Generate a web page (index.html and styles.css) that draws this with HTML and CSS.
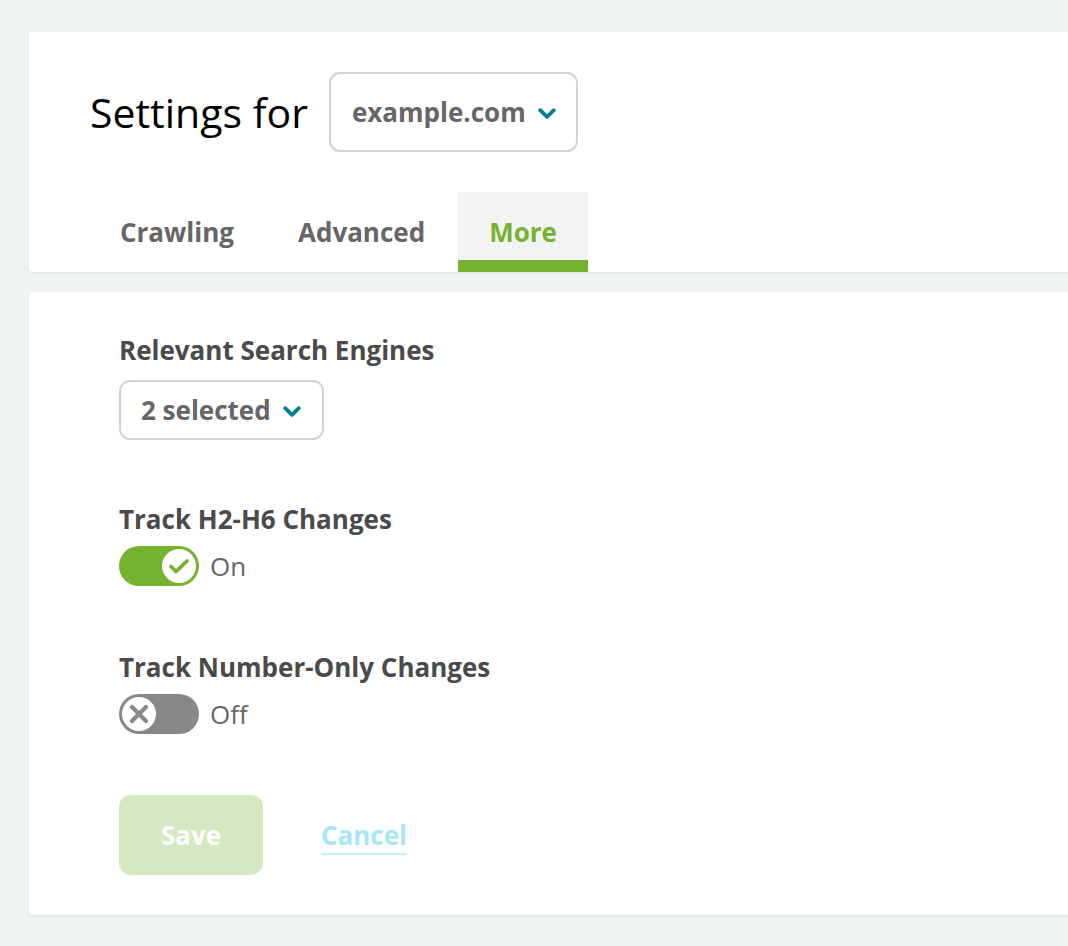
FILE: index.html
```html
<!DOCTYPE html>
<html lang="en">
<head>
<meta charset="utf-8">
<title>Settings</title>
<link rel="stylesheet" href="styles.css">
</head>
<body>
<div class="page">
  <section class="card header-card">
    <div class="title-row">
      <h1 class="title">Settings for</h1>
      <button class="select select-lg">
        <span>example.com</span>
        <svg class="chev" width="18" height="11" viewBox="0 0 18 11"><path d="M2.2 2.2l6.8 6.6 6.8-6.6" fill="none" stroke="#00838f" stroke-width="3.8" stroke-linecap="round" stroke-linejoin="round"/></svg>
      </button>
    </div>
    <nav class="tabs">
      <a class="tab">Crawling</a>
      <a class="tab">Advanced</a>
      <a class="tab active">More</a>
    </nav>
  </section>

  <section class="card body-card">
    <div class="field">
      <div class="label">Relevant Search Engines</div>
      <button class="select select-sm">
        <span>2 selected</span>
        <svg class="chev" width="18" height="11" viewBox="0 0 18 11"><path d="M2.2 2.2l6.8 6.6 6.8-6.6" fill="none" stroke="#00838f" stroke-width="3.8" stroke-linecap="round" stroke-linejoin="round"/></svg>
      </button>
    </div>

    <div class="field">
      <div class="label">Track H2-H6 Changes</div>
      <div class="toggle-row">
        <span class="toggle on">
          <span class="knob">
            <svg width="26" height="26" viewBox="0 0 26 26"><path d="M5 13.5l5 5L21 8" fill="none" stroke="#76b22f" stroke-width="3.8" stroke-linecap="round" stroke-linejoin="round"/></svg>
          </span>
        </span>
        <span class="toggle-text">On</span>
      </div>
    </div>

    <div class="field">
      <div class="label">Track Number-Only Changes</div>
      <div class="toggle-row">
        <span class="toggle off">
          <span class="knob">
            <svg width="26" height="26" viewBox="0 0 26 26"><path d="M6 6l14 14M20 6L6 20" fill="none" stroke="#888888" stroke-width="4.2" stroke-linecap="round"/></svg>
          </span>
        </span>
        <span class="toggle-text">Off</span>
      </div>
    </div>

    <div class="actions">
      <button class="btn-save">Save</button>
      <a class="cancel">Cancel</a>
    </div>
  </section>
</div>
</body>
</html>
```

FILE: styles.css
```css
* { box-sizing: border-box; }
html, body {
  margin: 0;
  padding: 0;
  background: #f0f3f4;
  font-family: "Open Sans", "Noto Sans", sans-serif;
}
.page {
  padding: 32px 0 0 29px;
  overflow: hidden;
  height: 946px;
}
.card {
  background: #ffffff;
  border-radius: 4px 0 0 4px;
  margin-right: -20px;
  box-shadow: 0 1px 3px rgba(0, 0, 0, 0.08);
}
.header-card {
  padding: 40px 0 0 61px;
  height: 240px;
}
.title-row {
  display: flex;
  align-items: center;
  gap: 21px;
}
.title {
  margin: 0;
  font-size: 41px;
  font-weight: 400;
  color: #000;
  line-height: 80px;
}
.select {
  display: inline-flex;
  align-items: center;
  gap: 12px;
  background: #fff;
  border: 2px solid #d3d3d3;
  border-radius: 11px;
  font-family: inherit;
  font-weight: 700;
  font-size: 26px;
  color: #666;
  cursor: pointer;
}
.select-lg {
  height: 80px;
  padding: 0 20px 0 21px;
}
.select-sm {
  height: 60px;
  padding: 0 21px 0 20px;
}
.chev { display: block; margin-top: 2px; }
.tabs {
  display: flex;
  margin-top: 40px;
  margin-left: -2px;
}
.tab {
  height: 80px;
  padding: 12px 32px 0;
  line-height: 56px;
  font-size: 26px;
  font-weight: 700;
  color: #666;
  border-bottom: 12px solid transparent;
}
.tab.active {
  background: #f3f3f3;
  color: #76b22f;
  border-bottom-color: #76b22f;
  margin-left: 1px;
  padding: 12px 31px 0;
}
.body-card {
  margin-top: 20px;
  padding: 40px 0 40px 90px;
  height: 623px;
}
.field + .field { margin-top: 61px; }
.label {
  font-size: 26px;
  font-weight: 700;
  color: #4a4a4a;
  line-height: 36px;
}
.field .select { margin-top: 12px; }
.toggle-row {
  display: flex;
  align-items: center;
  height: 44px;
  margin-top: 7px;
  gap: 11px;
}
.toggle {
  width: 80px;
  height: 40px;
  border-radius: 20px;
  display: flex;
  align-items: center;
  padding: 0 3px;
}
.toggle.on { background: #76b22f; justify-content: flex-end; }
.toggle.off { background: #888888; justify-content: flex-start; }
.knob {
  width: 34px;
  height: 34px;
  border-radius: 50%;
  background: #fff;
  display: flex;
  align-items: center;
  justify-content: center;
}
.toggle-text {
  font-size: 26px;
  color: #666;
  font-weight: 400;
}
.actions {
  display: flex;
  align-items: center;
  gap: 58px;
  margin-top: 59px;
}
.btn-save {
  width: 144px;
  height: 80px;
  border: none;
  border-radius: 12px;
  background: #d4e8c2;
  color: #fff;
  font-family: inherit;
  font-weight: 700;
  font-size: 26px;
}
.cancel {
  font-size: 26px;
  font-weight: 700;
  color: #a6e7f3;
  text-decoration: underline;
  text-decoration-color: #c8eff7;
  text-decoration-thickness: 2px;
  text-underline-offset: 8px;
}
```
